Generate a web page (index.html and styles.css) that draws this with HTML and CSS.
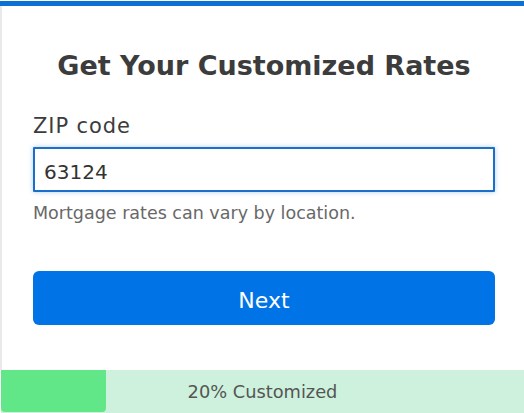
FILE: index.html
```html
<!DOCTYPE html>
<html lang="en">
<head>
<meta charset="utf-8">
<link rel="stylesheet" href="styles.css">
</head>
<body>
<div class="page">
  <div class="topbar"></div>
  <div class="card">
    <h1 class="title">Get Your Customized Rates</h1>
    <label class="label" for="zip">ZIP code</label>
    <input class="input" id="zip" type="text" value="63124">
    <p class="hint">Mortgage rates can vary by location.</p>
    <button class="btn" type="button">Next</button>
  </div>
  <div class="progress">
    <div class="progress-fill" style="width:105px"></div>
    <span class="progress-text">20% Customized</span>
  </div>
</div>
</body>
</html>
```

FILE: styles.css
```css
html, body {
  margin: 0;
  padding: 0;
  background: #ffffff;
}
.page {
  width: 524px;
  height: 413px;
  overflow: hidden;
  font-family: "DejaVu Sans", "Liberation Sans", sans-serif;
  color: #3c3c3c;
  display: flex;
  flex-direction: column;
}
.topbar {
  height: 5px;
  margin-top: 1px;
  background: #0b70d4;
  flex: none;
}
.card {
  flex: 1;
  border-left: 2px solid #e9e9e9;
  padding: 0 29px 0 31px;
  display: flex;
  flex-direction: column;
}
.title {
  margin: 43px 0 0 0;
  font-size: 27px;
  line-height: 34px;
  font-weight: 700;
  text-align: center;
  color: #3c3c3c;
}
.label {
  margin-top: 29px;
  font-size: 21px;
  line-height: 28px;
  letter-spacing: 0.9px;
  color: #3c3c3c;
}
.input {
  margin-top: 7px;
  box-sizing: border-box;
  height: 45px;
  width: 100%;
  border: 2px solid #1b6fc8;
  border-radius: 1px;
  padding: 5px 9px 0 9px;
  font-family: inherit;
  font-size: 20px;
  color: #333333;
  box-shadow: 0 0 5px rgba(27, 111, 200, 0.35);
  outline: none;
}
.hint {
  margin: 10px 0 0 0;
  font-size: 17.5px;
  line-height: 22px;
  color: #686868;
}
.btn {
  margin-top: 47px;
  box-sizing: border-box;
  height: 54px;
  width: 100%;
  border: none;
  border-radius: 6px;
  padding: 4px 0 0 0;
  background: #0073e6;
  color: #ffffff;
  font-family: inherit;
  font-size: 22px;
}
.progress {
  flex: none;
  height: 43px;
  margin-left: 1px;
  background: #cdf1dc;
  position: relative;
  display: flex;
  align-items: center;
  justify-content: center;
}
.progress-fill {
  position: absolute;
  left: 0;
  top: 0;
  bottom: 1px;
  background: #62e788;
  border-radius: 0 0 4px 4px;
}
.progress-text {
  position: relative;
  font-size: 17.8px;
  color: #555555;
}
```
